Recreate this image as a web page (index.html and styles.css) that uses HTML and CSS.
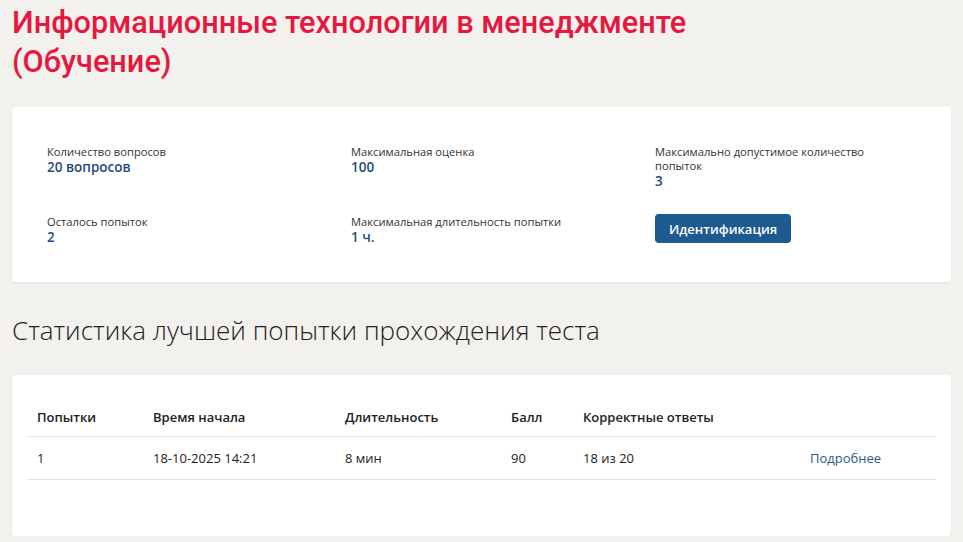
FILE: index.html
```html
<!DOCTYPE html>
<html lang="ru">
<head>
    <meta charset="UTF-8">
    <meta name="viewport" content="width=device-width, initial-scale=1.0">
    <title>Информационные технологии в менеджменте (Обучение)</title>
    <link rel="stylesheet" href="styles.css">
</head>
<body>
    <div class="page">
        <h1 class="test-title">Информационные технологии в менеджменте (Обучение)</h1>

        <div class="card info-card">
            <div class="info-grid">
                <div class="info-item">
                    <div class="info-label">Количество вопросов</div>
                    <div class="info-value">20 вопросов</div>
                </div>
                <div class="info-item">
                    <div class="info-label">Максимальная оценка</div>
                    <div class="info-value">100</div>
                </div>
                <div class="info-item">
                    <div class="info-label">Максимально допустимое количество попыток</div>
                    <div class="info-value">3</div>
                </div>
                <div class="info-item">
                    <div class="info-label">Осталось попыток</div>
                    <div class="info-value">2</div>
                </div>
                <div class="info-item">
                    <div class="info-label">Максимальная длительность попытки</div>
                    <div class="info-value">1 ч.</div>
                </div>
                <div class="info-item">
                    <button class="btn-primary">Идентификация</button>
                </div>
            </div>
        </div>

        <h2 class="section-title">Статистика лучшей попытки прохождения теста</h2>

        <div class="card stats-card">
            <table class="stats-table">
                <thead>
                    <tr>
                        <th class="col-num">Попытки</th>
                        <th class="col-start">Время начала</th>
                        <th class="col-dur">Длительность</th>
                        <th class="col-score">Балл</th>
                        <th class="col-correct">Корректные ответы</th>
                        <th></th>
                    </tr>
                </thead>
                <tbody>
                    <tr>
                        <td>1</td>
                        <td>18-10-2025 14:21</td>
                        <td>8 мин</td>
                        <td>90</td>
                        <td>18 из 20</td>
                        <td><a href="#" class="details-link">Подробнее</a></td>
                    </tr>
                </tbody>
            </table>
        </div>
    </div>
</body>
</html>
```

FILE: styles.css
```css
* {
    box-sizing: border-box;
}
body {
    margin: 0;
    background: #f3f1ee;
    font-family: "Open Sans", "Noto Sans", Arial, sans-serif;
    color: #222;
}
.page {
    padding: 0 12px;
}
.test-title {
    margin: 0;
    padding-top: 3px;
    font-family: "Roboto", "Open Sans", sans-serif;
    font-weight: 500;
    font-size: 30.7px;
    line-height: 39px;
    color: #e5193f;
    max-width: 720px;
}
.card {
    background: #fff;
    border-radius: 4px;
    box-shadow: 0 1px 2px rgba(0,0,0,0.08);
}
.info-card {
    margin-top: 26px;
    padding: 38px 35px 37px 35px;
}
.info-grid {
    display: grid;
    grid-template-columns: 304px 304px 240px;
    row-gap: 26px;
}
.info-label {
    font-size: 11.2px;
    line-height: 14px;
    color: #333;
}
.info-value {
    font-size: 13.5px;
    line-height: 16px;
    font-weight: 600;
    color: #1f4b7a;
}
.btn-primary {
    background: #1c5a8f;
    color: #fff;
    border: none;
    border-radius: 4px;
    padding: 0 14px;
    height: 29px;
    margin-top: -1px;
    font-family: inherit;
    font-size: 13px;
    font-weight: 600;
    cursor: pointer;
}
.section-title {
    margin: 0;
    padding: 33px 0 0 0;
    font-weight: 300;
    font-size: 26px;
    line-height: 30px;
    color: #222;
}
.stats-card {
    margin-top: 30px;
    padding: 23px 15px 56px 15px;
}
.stats-table {
    width: 100%;
    border-collapse: collapse;
    font-size: 13px;
}
.stats-table th {
    text-align: left;
    font-weight: 600;
    padding: 10px 10px;
    border-bottom: 1px solid #e2e2e2;
}
.stats-table td {
    padding: 12px 10px;
    border-bottom: 1px solid #e2e2e2;
}
.col-num { width: 116px; }
.col-start { width: 192px; }
.col-dur { width: 166px; }
.col-score { width: 72px; }
.col-correct { width: 227px; }
.details-link {
    color: #2a5a88;
    text-decoration: none;
}
.details-link:hover {
    text-decoration: underline;
}
```
